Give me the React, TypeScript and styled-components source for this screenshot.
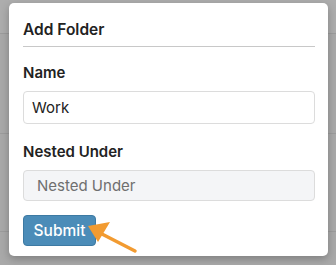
import React from 'react';
import styled, { createGlobalStyle } from 'styled-components';

const GlobalStyle = createGlobalStyle`
  html, body {
    margin: 0;
    padding: 0;
    background: #a9a9a9;
  }
  body {
    font-family: Inter, "Liberation Sans", Arial, sans-serif;
    -webkit-font-smoothing: antialiased;
  }
`;

const Screen = styled.div`
  position: relative;
  width: 336px;
  height: 265px;
  overflow: hidden;
  background: #a9a9a9;
`;

const Backdrop = styled.div`
  display: flex;
  flex-direction: column;
`;

const BackRow = styled.div<{ $h: number; $shade?: string }>`
  height: ${(p) => p.$h}px;
  background: ${(p) => p.$shade || '#a9a9a9'};
  border-bottom: 1px solid #9c9c9c;
`;

const Modal = styled.div`
  position: absolute;
  left: 9px;
  top: 3px;
  width: 319px;
  height: 253px;
  box-sizing: border-box;
  background: #fff;
  border-radius: 5px;
  box-shadow: 0 3px 8px rgba(0, 0, 0, 0.25);
  padding: 0 13px 0 14px;
  display: flex;
  flex-direction: column;
`;

const Header = styled.div`
  padding: 17px 0 6px;
  border-bottom: 1px solid #c8c8c8;
  font-size: 15.5px;
  line-height: 20px;
  font-weight: 600;
  color: #222;
`;

const Form = styled.form`
  display: flex;
  flex-direction: column;
  padding-top: 16px;
`;

const Label = styled.label`
  font-size: 15px;
  line-height: 20px;
  font-weight: 600;
  color: #222;
  margin-bottom: 8px;
`;

const Input = styled.input<{ $disabled?: boolean }>`
  box-sizing: border-box;
  width: 100%;
  height: ${(p) => (p.$disabled ? 31 : 33)}px;
  margin: 0 0 18px;
  padding: 0 8px;
  border: 1px solid #dcdcdc;
  border-radius: 4px;
  background: ${(p) => (p.$disabled ? '#f4f5f7' : '#fff')};
  font-family: inherit;
  font-size: 15px;
  color: #222;
  outline: none;

  &::placeholder {
    color: #6f6f6f;
    padding-left: 5px;
  }
`;

const Button = styled.button`
  align-self: flex-start;
  width: 73px;
  height: 31px;
  margin-top: -4px;
  border: 1px solid #3d7aa3;
  border-radius: 4px;
  background: #4b8cb8;
  color: #fff;
  font-family: inherit;
  font-size: 15.5px;
  font-weight: 500;
  cursor: pointer;
`;

const Arrow = styled.svg`
  position: absolute;
  left: 84px;
  top: 219px;
  width: 56px;
  height: 38px;
`;

const App = () => {
  return (
    <>
      <GlobalStyle />
      <Screen>
        <Backdrop>
          <BackRow $h={33} $shade="#adadad" />
          <BackRow $h={99} />
          <BackRow $h={97} />
          <BackRow $h={40} />
        </Backdrop>
        <Modal>
          <Header>Add Folder</Header>
          <Form onSubmit={(e) => e.preventDefault()}>
            <Label>Name</Label>
            <Input defaultValue="Work" />
            <Label>Nested Under</Label>
            <Input $disabled placeholder="Nested Under" />
            <Button type="submit">Submit</Button>
          </Form>
        </Modal>
        <Arrow viewBox="0 0 56 38">
          <line x1="51" y1="32" x2="16" y2="14" stroke="#f29b31" strokeWidth="3.5" strokeLinecap="round" />
          <polygon points="4,7 26,3 14,23" fill="#f29b31" />
        </Arrow>
      </Screen>
    </>
  );
};

export default App;
